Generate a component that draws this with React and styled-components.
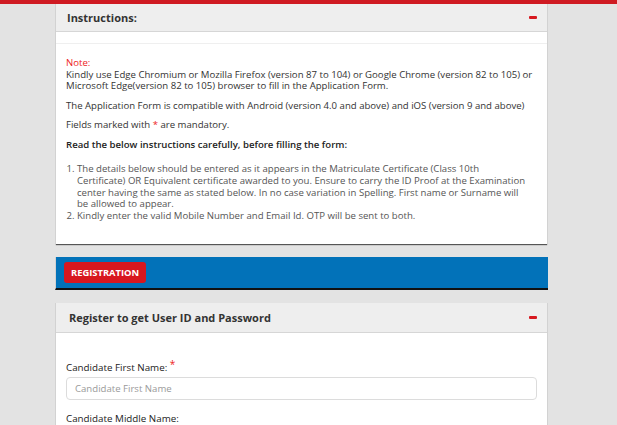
import React from 'react';
import styled, { createGlobalStyle } from 'styled-components';

const GlobalStyle = createGlobalStyle`
  html, body {
    margin: 0;
    padding: 0;
    background: #e3e3e3;
    font-family: "Open Sans", "Liberation Sans", Arial, sans-serif;
    color: #333;
    overflow: hidden;
  }
`;

const Page = styled.div`
  border-top: 4px solid #cf1a22;
  height: 425px;
  box-sizing: border-box;
  overflow: hidden;
`;

const Wrap = styled.div`
  width: 493px;
  margin-left: 55px;
  display: flex;
  flex-direction: column;
`;

const Panel = styled.section`
  background: #fff;
  border-left: 1px solid #d2d2d2;
  border-right: 1px solid #d2d2d2;
  box-shadow: 0 2px 1px -1px #555;
  margin-bottom: ${p => p.$gap || 0}px;
`;

const PanelHead = styled.div`
  height: ${p => p.$h}px;
  background: #eee;
  border-bottom: 1px solid #d6d6d6;
  display: flex;
  align-items: center;
  justify-content: space-between;
  padding: 0 10px 0 ${p => p.$pl}px;
  box-sizing: border-box;
`;

const HeadTitle = styled.h3`
  margin: 0;
  font-size: 11px;
  font-weight: 700;
  color: #333;
`;

const Minus = styled.span`
  display: block;
  width: 8px;
  height: 3px;
  background: #d71920;
  border-radius: 1px;
`;

const Strip = styled.div`
  height: 11px;
  border-bottom: 1px solid #efefef;
`;

const Body = styled.div`
  padding: ${p => p.$pad};
  font-size: 9.6px;
  line-height: 11.5px;
`;

const Note = styled.div`
  color: #ee1c1c;
`;

const Para = styled.p`
  margin: 0 0 ${p => p.$mb || 8}px;
  font-weight: ${p => (p.$bold ? 600 : 400)};
  color: ${p => (p.$bold ? '#222' : '#333')};
`;

const Star = styled.span`
  color: #ee1c1c;
`;

const List = styled.ol`
  margin: 0;
  padding: 0 0 0 11px;
  color: #555;
  li { line-height: 11.8px; white-space: nowrap; }
`;

const Blue = styled.div`
  height: 33px;
  background: #0272b9;
  border-bottom: 2px solid #111;
  box-sizing: border-box;
  display: flex;
  align-items: center;
  padding-left: 8px;
  margin-bottom: 13px;
  border-left: 1px solid #d2d2d2;
`;

const Badge = styled.span`
  background: #d8171f;
  color: #fff;
  font-size: 9.4px;
  font-weight: 700;
  padding: 4px 7px;
  border-radius: 3px;
`;

const Label = styled.label`
  display: block;
  font-size: 9.8px;
  color: #222;
  margin-bottom: 4px;
  sup { color: #ee1c1c; font-size: 10px; top: -3px; position: relative; vertical-align: baseline; }
`;

const Input = styled.input`
  display: block;
  width: 100%;
  height: 23px;
  box-sizing: border-box;
  border: 1px solid #dcdcdc;
  border-radius: 4px;
  padding: 0 8px;
  font-family: inherit;
  font-size: 9.6px;
  margin-bottom: 13px;
  &::placeholder { color: #9a9a9a; }
`;

export default function App() {
  return (
    <>
      <GlobalStyle />
      <Page>
        <Wrap>
          <Panel $gap={13}>
            <PanelHead $h={28} $pl={11}>
              <HeadTitle>Instructions:</HeadTitle>
              <Minus />
            </PanelHead>
            <Strip />
            <Body $pad="13px 10px 22px">
              <Note>Note:</Note>
              <Para>
                Kindly use Edge Chromium or Mozilla Firefox (version 87 to 104) or Google Chrome (version 82 to 105) or
                Microsoft Edge(version 82 to 105) browser to fill in the Application Form.
              </Para>
              <Para>The Application Form is compatible with Android (version 4.0 and above) and iOS (version 9 and above)</Para>
              <Para>Fields marked with <Star>*</Star> are mandatory.</Para>
              <Para $bold $mb={13}>Read the below instructions carefully, before filling the form:</Para>
              <List>
                <li>
                  The details below should be entered as it appears in the Matriculate Certificate (Class 10th<br />
                  Certificate) OR Equivalent certificate awarded to you. Ensure to carry the ID Proof at the Examination<br />
                  center having the same as stated below. In no case variation in Spelling. First name or Surname will<br />
                  be allowed to appear.
                </li>
                <li>Kindly enter the valid Mobile Number and Email Id. OTP will be sent to both.</li>
              </List>
            </Body>
          </Panel>
          <Blue>
            <Badge>REGISTRATION</Badge>
          </Blue>
          <Panel>
            <PanelHead $h={30} $pl={13}>
              <HeadTitle>Register to get User ID and Password</HeadTitle>
              <Minus />
            </PanelHead>
            <Body $pad="29px 10px 10px">
              <Label>Candidate First Name: <sup>*</sup></Label>
              <Input placeholder="Candidate First Name" />
              <Label>Candidate Middle Name:</Label>
              <Input placeholder="Candidate Middle Name" />
            </Body>
          </Panel>
        </Wrap>
      </Page>
    </>
  );
}
